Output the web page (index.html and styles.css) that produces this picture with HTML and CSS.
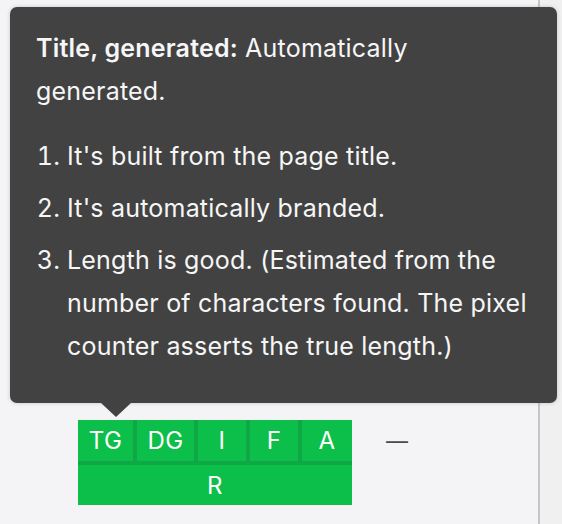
FILE: index.html
```html
<!DOCTYPE html>
<html lang="en">
<head>
<meta charset="utf-8">
<title>Title tooltip</title>
<link rel="stylesheet" href="styles.css">
</head>
<body>
<div class="page">
  <main class="main">
    <div class="row">
      <div class="badges">
        <div class="cell">TG</div>
        <div class="cell">DG</div>
        <div class="cell">I</div>
        <div class="cell">F</div>
        <div class="cell">A</div>
        <div class="cell wide">R</div>
      </div>
      <div class="dash">—</div>
    </div>
  </main>
  <aside class="side"></aside>
</div>
<div class="tooltip">
  <p class="lead"><strong>Title, generated:</strong> Automatically generated.</p>
  <ol class="list">
    <li>It's built from the page title.</li>
    <li>It's automatically branded.</li>
    <li>Length is good. (Estimated from the number of characters found. The pixel counter asserts the true length.)</li>
  </ol>
</div>
</body>
</html>
```

FILE: styles.css
```css
html, body {
  margin: 0;
  padding: 0;
}
body {
  background: #f4f4f6;
  font-family: Inter, "Noto Sans", "Liberation Sans", sans-serif;
  width: 562px;
  height: 524px;
  overflow: hidden;
  position: relative;
}
.page {
  display: flex;
  height: 524px;
}
.main {
  width: 540px;
  box-sizing: border-box;
  border-right: 2px solid #c6c6c8;
  padding: 420px 0 0 78px;
}
.side {
  flex: 1;
  background: #f0f0f1;
}
.row {
  display: flex;
  align-items: flex-start;
}
.badges {
  display: grid;
  grid-template-columns: 55px 57px 48px 48px 50px;
  grid-template-rows: 41px 40px;
  gap: 4px;
  background: #10a844;
}
.cell {
  background: #0cbf4a;
  color: #ffffff;
  font-size: 24px;
  letter-spacing: 0.4px;
  display: flex;
  align-items: center;
  justify-content: center;
}
.wide {
  grid-column: 1 / -1;
}
.dash {
  margin-left: 34px;
  height: 43px;
  line-height: 43px;
  font-size: 22px;
  color: #4a4a4a;
}
.tooltip {
  position: absolute;
  left: 10px;
  top: 7px;
  width: 547px;
  height: 396px;
  box-sizing: border-box;
  background: #424242;
  border-radius: 7px;
  box-shadow: 0 0 4px rgba(0, 0, 0, 0.18);
  padding: 20px 26px;
  color: #f6f6f6;
  font-size: 25px;
  line-height: 43px;
  letter-spacing: 0.2px;
}
.tooltip::after {
  content: "";
  position: absolute;
  left: 91px;
  top: 100%;
  border-left: 15px solid transparent;
  border-right: 15px solid transparent;
  border-top: 14px solid #424242;
}
.lead {
  margin: 0;
}
.lead strong {
  font-weight: 600;
}
.list {
  margin: 22px 0 0;
  padding-left: 31px;
}
.list li {
  margin-bottom: 9px;
  padding-left: 0;
}
```
